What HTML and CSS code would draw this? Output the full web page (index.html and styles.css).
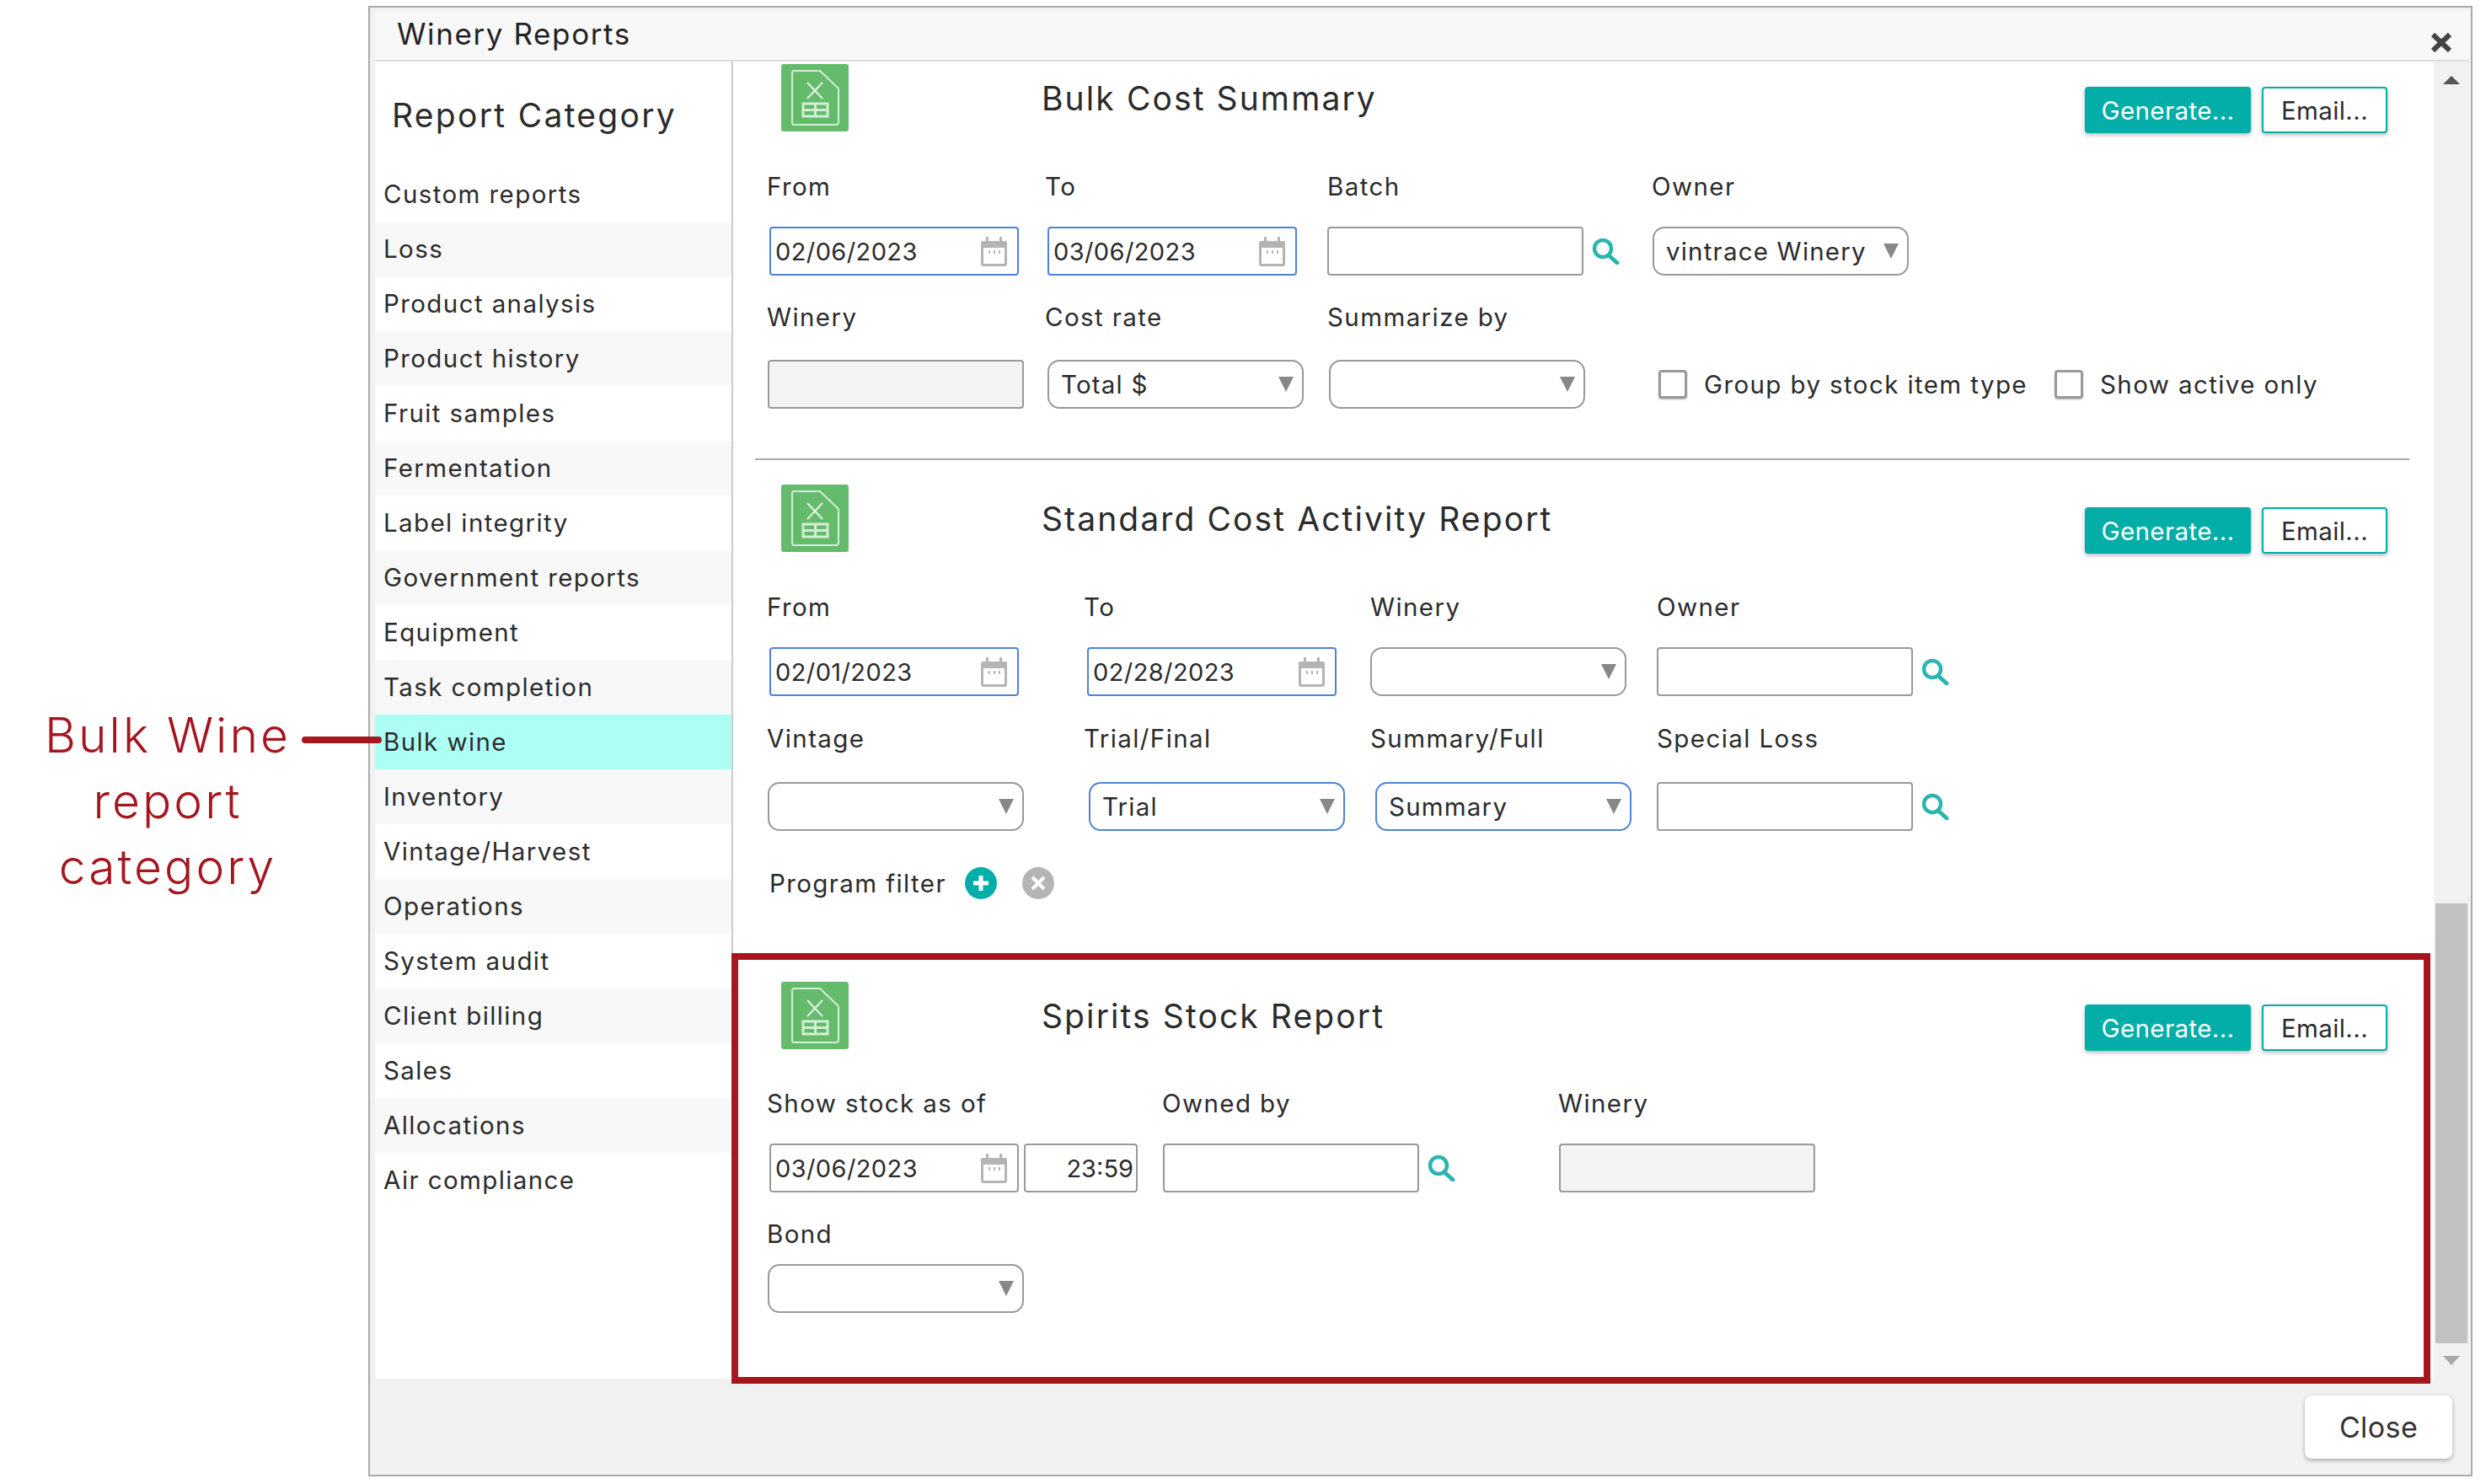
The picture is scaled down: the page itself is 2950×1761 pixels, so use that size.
FILE: index.html
```html
<!DOCTYPE html>
<html lang="en">
<head>
    <meta charset="UTF-8">
    <title>Winery Reports</title>
    <link rel="stylesheet" href="styles.css">
</head>
<body>
    <svg class="defs" width="0" height="0">
        <symbol id="xl" viewBox="0 0 80 80">
            <rect width="80" height="80" rx="3" fill="#65bb6c"/>
            <path d="M15 8H46L68 29V69Q68 72 65 72H15Q13 72 13 69V11Q13 8 15 8Z" fill="none" stroke="#d5eed7" stroke-width="2"/>
            <path d="M31 22L49 41M49 22L31 41" fill="none" stroke="#e6f5e7" stroke-width="2"/>
            <path d="M26 47H55V62H26ZM26 54.500H55M40.500 47V62" fill="none" stroke="#d5eed7" stroke-width="3"/>
        </symbol>
        <symbol id="cal" viewBox="0 0 31 35">
            <path d="M6 0H9V5H22V0H25V5H29Q31 5 31 7V32Q31 35 28 35H3Q0 35 0 32V7Q0 5 2 5H6Z" fill="#b4b4b4"/>
            <rect x="3" y="13" width="25" height="19" fill="#fff"/>
            <path d="M9 16H11V20H9ZM15 16H17V20H15ZM21 16H23V20H21Z" fill="#b4b4b4"/>
        </symbol>
        <symbol id="find" viewBox="0 0 33 32">
            <circle cx="13" cy="13" r="10" fill="none" stroke="#2ab5b0" stroke-width="4.500"/>
            <path d="M20 21L30 30" fill="none" stroke="#2ab5b0" stroke-width="5" stroke-linecap="round"/>
        </symbol>
    </svg>

    <div class="note">
        <p class="note-text">Bulk Wine<br>report<br>category</p>
    </div>
    <div class="note-line"></div>

    <div class="dialog">
        <div class="dialog-title">
            <span>Winery Reports</span>
            <svg class="close-x" viewBox="0 0 26 25"><path d="M3 3L23 22M23 3L3 22" stroke="#444" stroke-width="6" fill="none"/></svg>
        </div>

        <div class="dialog-body">
            <div class="sidebar">
                <h2 class="sidebar-head">Report Category</h2>
                <ul class="cats">
                    <li>Custom reports</li>
                    <li>Loss</li>
                    <li>Product analysis</li>
                    <li>Product history</li>
                    <li>Fruit samples</li>
                    <li>Fermentation</li>
                    <li>Label integrity</li>
                    <li>Government reports</li>
                    <li>Equipment</li>
                    <li>Task completion</li>
                    <li class="active">Bulk wine</li>
                    <li>Inventory</li>
                    <li>Vintage/Harvest</li>
                    <li>Operations</li>
                    <li>System audit</li>
                    <li>Client billing</li>
                    <li>Sales</li>
                    <li>Allocations</li>
                    <li>Air compliance</li>
                </ul>
            </div>

            <div class="reports">
                <!-- Bulk cost -->
                <div class="report first">
                    <div class="report-head">
                        <svg class="xl-icon"><use href="#xl"/></svg>
                        <div class="report-title">Bulk Cost Summary</div>
                        <div class="head-btns">
                            <button class="btn btn-gen">Generate...</button>
                            <button class="btn btn-mail">Email...</button>
                        </div>
                    </div>
                    <div class="form-grid grid-a">
                        <label>From</label><label>To</label><label>Batch</label><label>Owner</label>
                        <div class="box date focus ml3"><span>02/06/2023</span><svg class="cal"><use href="#cal"/></svg></div>
                        <div class="box date focus ml3"><span>03/06/2023</span><svg class="cal"><use href="#cal"/></svg></div>
                        <div class="inline"><div class="box wide"></div><svg class="find"><use href="#find"/></svg></div>
                        <div class="box sel wide ml1"><span>vintrace Winery</span><i class="arrow"></i></div>
                        <label>Winery</label><label>Cost rate</label><label>Summarize by</label><span></span>
                        <div class="box wide readonly ml1"></div>
                        <div class="box sel wide ml3"><span>Total $</span><i class="arrow"></i></div>
                        <div class="box sel wide ml2"><i class="arrow"></i></div>
                        <div class="checks">
                            <i class="check"></i><span class="check-label">Group by stock item type</span>
                            <i class="check"></i><span class="check-label">Show active only</span>
                        </div>
                    </div>
                </div>
                <div class="report-sep"></div>

                <!-- Standard cost -->
                <div class="report second">
                    <div class="report-head">
                        <svg class="xl-icon"><use href="#xl"/></svg>
                        <div class="report-title">Standard Cost Activity Report</div>
                        <div class="head-btns">
                            <button class="btn btn-gen">Generate...</button>
                            <button class="btn btn-mail">Email...</button>
                        </div>
                    </div>
                    <div class="form-grid grid-b">
                        <label>From</label><label>To</label><label>Winery</label><label>Owner</label>
                        <div class="box date focus ml3"><span>02/01/2023</span><svg class="cal"><use href="#cal"/></svg></div>
                        <div class="box date focus ml4"><span>02/28/2023</span><svg class="cal"><use href="#cal"/></svg></div>
                        <div class="box sel wide"><i class="arrow"></i></div>
                        <div class="inline"><div class="box wide"></div><svg class="find"><use href="#find"/></svg></div>
                        <label>Vintage</label><label>Trial/Final</label><label>Summary/Full</label><label>Special Loss</label>
                        <div class="box sel wide ml1"><i class="arrow"></i></div>
                        <div class="box sel wide focus ml6"><span>Trial</span><i class="arrow"></i></div>
                        <div class="box sel wide focus ml6"><span>Summary</span><i class="arrow"></i></div>
                        <div class="inline"><div class="box wide"></div><svg class="find"><use href="#find"/></svg></div>
                    </div>
                    <div class="program">
                        <span>Program filter</span>
                        <svg class="round" viewBox="0 0 38 38"><circle cx="19" cy="19" r="19" fill="#03aea9"/><path d="M19 10V28M10 19H28" stroke="#fff" stroke-width="5"/></svg>
                        <svg class="round" viewBox="0 0 38 38"><circle cx="19" cy="19" r="19" fill="#b5b5b5"/><path d="M12 12L26 26M26 12L12 26" stroke="#fff" stroke-width="4"/></svg>
                    </div>
                </div>

                <!-- Spirits -->
                <div class="report third">
                    <div class="report-head">
                        <svg class="xl-icon"><use href="#xl"/></svg>
                        <div class="report-title">Spirits Stock Report</div>
                        <div class="head-btns">
                            <button class="btn btn-gen">Generate...</button>
                            <button class="btn btn-mail">Email...</button>
                        </div>
                    </div>
                    <div class="form-grid grid-c">
                        <label>Show stock as of</label><label>Owned by</label><label>Winery</label>
                        <div class="inline tight ml3">
                            <div class="box date"><span>03/06/2023</span><svg class="cal"><use href="#cal"/></svg></div>
                            <div class="box time">23:59</div>
                        </div>
                        <div class="inline ml1"><div class="box wide"></div><svg class="find"><use href="#find"/></svg></div>
                        <div class="box wide readonly ml1"></div>
                        <label class="full">Bond</label>
                        <div class="box sel wide ml1"><i class="arrow"></i></div>
                    </div>
                </div>
            </div>

            <div class="scrollbar">
                <i class="scroll-up"></i>
                <div class="scroll-thumb"></div>
                <i class="scroll-down"></i>
            </div>
        </div>

        <div class="dialog-foot">
            <button class="btn-close">Close</button>
        </div>

        <div class="highlight"></div>
    </div>
</body>
</html>
```

FILE: styles.css
```css
* {
    box-sizing: border-box;
}
body {
    margin: 0;
    height: 1761px;
    padding-top: 7px;
    display: flex;
    position: relative;
    background: #fff;
    font-family: Inter, "Open Sans", sans-serif;
    font-size: 29.5px;
    letter-spacing: 1.4px;
    color: #2b2b2b;
    overflow: hidden;
}
.defs {
    position: absolute;
}

/* annotation on the left */
.note {
    flex: 0 0 437px;
    padding-top: 827px;
}
.note-text {
    margin: 0;
    width: 398px;
    text-align: center;
    font-size: 57px;
    font-weight: 300;
    letter-spacing: 3px;
    line-height: 78px;
    color: #a5161f;
}
.note-line {
    position: absolute;
    left: 358px;
    top: 874px;
    width: 95px;
    height: 8px;
    border-radius: 4px;
    background: #a5161f;
    z-index: 2;
}

/* dialog */
.dialog {
    position: relative;
    width: 2497px;
    height: 1745px;
    border: 2px solid #aaa;
    padding: 4px 2px 0 6px;
    background: #f1f1f1;
    display: flex;
    flex-direction: column;
}
.dialog-title {
    flex: 0 0 60px;
    display: flex;
    align-items: center;
    justify-content: space-between;
    padding: 0 20px 4px 26px;
    background: #f8f8f8;
    border-bottom: 2px solid #ddd;
    font-size: 35px;
    letter-spacing: 1.6px;
    color: #222;
}
.close-x {
    width: 26px;
    height: 25px;
    margin-top: 20px;
}
.dialog-body {
    display: flex;
    height: 1563px;
    background: #fff;
}

/* sidebar */
.sidebar {
    flex: 0 0 425px;
    border-right: 2px solid #ccc;
}
.sidebar-head {
    margin: 0;
    height: 125px;
    padding: 39px 0 0 20px;
    font-size: 39px;
    letter-spacing: 2.3px;
    line-height: 50px;
    font-weight: 400;
}
.cats {
    list-style: none;
    margin: 0;
    padding: 0;
}
.cats li {
    height: 65px;
    line-height: 65px;
    padding-left: 10px;
}
.cats li:nth-child(even) {
    background: #f8f8f8;
}
.cats li.active {
    background: #aefff3;
}

/* report sections */
.reports {
    flex: 0 0 2018px;
    width: 2018px;
}
.report {
    padding: 0 55px 0 40px;
}
.report.first {
    padding-top: 3px;
}
.report.second {
    padding-top: 29px;
}
.report.third {
    padding-top: 97px;
}
.report-sep {
    height: 2px;
    margin: 59px 29px 0 26px;
    background: #aaa;
}
.report-head {
    display: flex;
    align-items: flex-start;
    height: 80px;
}
.xl-icon {
    flex: 0 0 80px;
    width: 80px;
    height: 80px;
    margin-left: 17px;
}
.report-title {
    margin: 17px 0 0 229px;
    font-size: 39px;
    letter-spacing: 2.1px;
    line-height: 48px;
    color: #2b2b2b;
}
.head-btns {
    margin: 27px 0 0 auto;
    display: flex;
    gap: 13px;
}
.btn {
    height: 55px;
    border-radius: 4px;
    font: inherit;
    letter-spacing: 0.4px;
    box-shadow: 0 2px 5px rgba(0,0,0,0.3);
    padding: 0;
}
.btn-gen {
    width: 197px;
    border: 0;
    background: #03aea9;
    color: #fff;
}
.btn-mail {
    width: 149px;
    border: 2px solid #03aea9;
    background: #fff;
    color: #2b2b2b;
}

/* form rows */
.form-grid {
    display: grid;
    margin-top: 45px;
}
.form-grid label {
    line-height: 40px;
}
.grid-a {
    grid-template-columns: 330px 335px 385px 1fr;
    grid-template-rows: 68px 87px 71px 58px;
}
.grid-b {
    grid-template-columns: 376px 340px 340px 1fr;
    grid-template-rows: 68px 88px 72px 58px;
}
.grid-c {
    margin-top: 44px;
    grid-template-columns: 469px 470px 1fr;
    grid-template-rows: 68px 87px 56px 58px;
}
.full {
    grid-column: 1 / -1;
}
.box {
    height: 58px;
    border: 2px solid #999;
    border-radius: 4px;
    background: #fff;
    display: flex;
    align-items: center;
    justify-content: space-between;
}
.wide {
    width: 304px;
}
.date {
    width: 296px;
    padding: 0 12px 0 5px;
    font-size: 29px;
    letter-spacing: 0.4px;
}
.focus {
    border-color: #4f81dc;
}
.readonly {
    background: #f3f3f3;
}
.sel {
    border-radius: 14px;
    padding: 0 10px 0 14px;
    letter-spacing: 1.2px;
}
.time {
    width: 135px;
    padding-right: 3px;
    justify-content: flex-end;
    font-size: 29px;
    letter-spacing: 0;
}
.arrow {
    width: 0;
    height: 0;
    margin-left: auto;
    border-left: 9px solid transparent;
    border-right: 9px solid transparent;
    border-top: 18px solid #888;
}
.cal {
    width: 31px;
    height: 35px;
}
.find {
    width: 33px;
    height: 32px;
    margin-left: 10px;
}
.inline {
    display: flex;
    align-items: center;
    height: 58px;
    align-self: start;
}
.tight {
    gap: 6px;
}
.ml1 { margin-left: 1px; }
.ml2 { margin-left: 2px; }
.ml3 { margin-left: 3px; }
.ml4 { margin-left: 4px; }
.ml6 { margin-left: 6px; }

.checks {
    display: flex;
    align-items: center;
    margin-left: 8px;
}
.check {
    width: 34px;
    height: 34px;
    border: 3px solid #999;
    border-radius: 4px;
    box-shadow: 0 1px 2px rgba(0,0,0,0.3);
}
.check-label {
    margin: 0 32px 0 20px;
}
.program {
    display: flex;
    align-items: center;
    height: 40px;
    margin: 42px 0 0 3px;
}
.round {
    width: 38px;
    height: 38px;
    margin-left: 22px;
}
.round + .round {
    margin-left: 30px;
}

/* scrollbar */
.scrollbar {
    flex: 0 0 42px;
    background: #f1f1f1;
    display: flex;
    flex-direction: column;
    align-items: center;
    padding: 17px 2px 16px;
}
.scroll-up {
    width: 0;
    height: 0;
    border-left: 10px solid transparent;
    border-right: 10px solid transparent;
    border-bottom: 10px solid #555;
}
.scroll-thumb {
    width: 38px;
    height: 522px;
    margin-top: auto;
    background: #c1c1c1;
}
.scroll-down {
    width: 0;
    height: 0;
    margin-top: 15px;
    border-left: 10px solid transparent;
    border-right: 10px solid transparent;
    border-top: 11px solid #aaa;
}

/* footer */
.dialog-foot {
    display: flex;
    justify-content: flex-end;
    padding: 20px 20px 0 0;
}
.btn-close {
    width: 175px;
    height: 75px;
    border: 0;
    border-radius: 8px;
    background: #fff;
    font: inherit;
    font-size: 34px;
    letter-spacing: 0.4px;
    color: #333;
    box-shadow: 0 2px 5px rgba(0,0,0,0.3);
}

/* red box drawn over the last report */
.highlight {
    position: absolute;
    left: 429px;
    top: 1122px;
    width: 2016px;
    height: 511px;
    border: 8px solid #a5161f;
    pointer-events: none;
}
```
